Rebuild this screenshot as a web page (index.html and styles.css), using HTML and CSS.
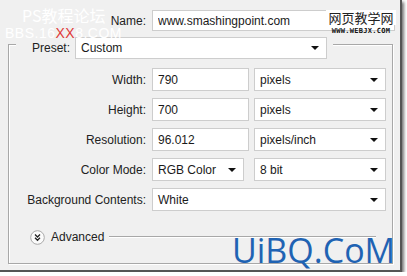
FILE: index.html
```html
<!DOCTYPE html>
<html lang="en">
  <head>
    <meta charset="UTF-8" />
    <meta name="viewport" content="width=device-width, initial-scale=1.0" />
    <title>New Document</title>
    <link rel="stylesheet" href="styles.css">
  </head>
  <body>
    <div class="dialog">
      <div class="row name-row">
        <label class="label name-label" for="name-input">Name:</label>
        <input class="field name-field" type="text" id="name-input" value="www.smashingpoint.com" />
      </div>

      <div class="group">
        <div class="preset">
          <span class="label">Preset:</span>
          <div class="select preset-select"><span>Custom</span><i class="caret"></i></div>
        </div>

        <div class="fields">
          <div class="row">
            <span class="label">Width:</span>
            <input class="field num" type="text" value="790" />
            <div class="select unit"><span>pixels</span><i class="caret"></i></div>
          </div>
          <div class="row">
            <span class="label">Height:</span>
            <input class="field num" type="text" value="700" />
            <div class="select unit"><span>pixels</span><i class="caret"></i></div>
          </div>
          <div class="row">
            <span class="label">Resolution:</span>
            <input class="field num" type="text" value="96.012" />
            <div class="select unit"><span>pixels/inch</span><i class="caret"></i></div>
          </div>
          <div class="row">
            <span class="label">Color Mode:</span>
            <div class="select mode"><span>RGB Color</span><i class="caret"></i></div>
            <div class="select unit"><span>8 bit</span><i class="caret"></i></div>
          </div>
          <div class="row">
            <span class="label">Background Contents:</span>
            <div class="select wide"><span>White</span><i class="caret"></i></div>
          </div>
        </div>

        <div class="advanced">
          <svg class="adv-icon" width="15" height="15" viewBox="0 0 15 15">
            <circle cx="7.5" cy="7.5" r="6.8" fill="#fbfbfb" stroke="#a9a9a9" stroke-width="1" />
            <path d="M5 4.5 L7.5 7 L10 4.5 M5 7.8 L7.5 10.3 L10 7.8" fill="none" stroke="#222" stroke-width="1.3" />
          </svg>
          <span class="adv-text">Advanced</span>
          <span class="adv-line"></span>
        </div>
      </div>

      <!-- watermarks laid over the dialog -->
      <div class="mark-ps">PS教程论坛</div>
      <div class="mark-bbs">BBS.16<span class="red">XX</span>8.COM</div>
      <div class="mark-webjx">
        <div class="webjx-cn">网页教学网</div>
        <div class="webjx-en">WWW.WEBJX.COM</div>
      </div>
      <div class="mark-uibq">UiBQ.CoM</div>
    </div>
  </body>
</html>
```

FILE: styles.css
```css
/* Reset styles */
*,
*::before,
*::after {
  margin: 0;
  padding: 0;
  box-sizing: border-box;
}

body {
  font-family: "Liberation Sans", Arial, sans-serif;
  font-size: 12px;
  color: #222;
  background-color: #fff;
}

.dialog {
  position: relative;
  width: 402px;
  height: 272px;
  padding-top: 10px;
  background-color: #f0f0f0;
  border-right: 2px solid #555;
  border-bottom: 2px solid #555;
  box-shadow: 2px 2px 3px rgba(0, 0, 0, 0.55);
}

.row {
  display: flex;
  align-items: center;
  height: 23px;
}

.label {
  color: #222;
  white-space: nowrap;
}

.fields .label {
  width: 137px;
  margin-right: 6px;
  text-align: right;
}

/* Name row */
.name-row {
  height: 21px;
}

.name-label {
  width: 146px;
  margin-right: 6px;
  text-align: right;
}

.field,
.select {
  height: 100%;
  background-color: #fff;
  border: 1px solid #cdcdcd;
  font-family: inherit;
  font-size: 12px;
  color: #1a1a1a;
}

.field {
  padding: 0 5px;
  outline: none;
}

.name-field {
  width: 243px;
}

.select {
  display: flex;
  align-items: center;
  justify-content: space-between;
  padding: 0 7px 0 5px;
}

.caret {
  width: 0;
  height: 0;
  border-left: 4px solid transparent;
  border-right: 4px solid transparent;
  border-top: 4px solid #111;
}

/* Group box */
.group {
  margin-top: 13px;
  margin-left: 8px;
  width: 385px;
  height: 220px;
  border: 1px solid #a8a8a8;
  box-shadow: inset 1px 1px 0 #fff, 1px 1px 0 #fff;
}

.preset {
  display: inline-flex;
  align-items: center;
  gap: 5px;
  height: 22px;
  margin-top: -8px;
  margin-left: 7px;
  padding: 0 6px 0 16px;
  background-color: #f0f0f0;
  vertical-align: top;
}

.preset-select {
  width: 252px;
}

.fields {
  display: flex;
  flex-direction: column;
  gap: 7px;
  margin-top: 9px;
}

.num {
  width: 97px;
  margin-right: 5px;
}

.unit {
  width: 132px;
}

.mode {
  width: 92px;
  margin-right: 10px;
}

.wide {
  width: 234px;
}

/* Advanced */
.advanced {
  display: flex;
  align-items: center;
  height: 16px;
  margin-top: 18px;
  padding-left: 21px;
  margin-right: 16px;
}

.adv-icon {
  display: block;
  margin-right: 6px;
}

.adv-text {
  margin-right: 5px;
}

.adv-line {
  flex: 1;
  height: 2px;
  border-top: 1px solid #a8a8a8;
  border-bottom: 1px solid #fff;
}

/* Watermarks */
.mark-ps {
  position: absolute;
  left: 22px;
  top: 7px;
  font-family: "Noto Sans CJK SC", sans-serif;
  font-size: 16px;
  line-height: 16px;
  color: #fff;
}

.mark-bbs {
  position: absolute;
  left: 5px;
  top: 26px;
  font-size: 14px;
  line-height: 14px;
  color: #fff;
  letter-spacing: 0.5px;
}

.mark-bbs .red {
  color: #e03a3a;
}

.mark-webjx {
  position: absolute;
  left: 326px;
  top: 10px;
  width: 70px;
  text-align: center;
}

.webjx-cn {
  font-family: "Noto Sans CJK SC", sans-serif;
  font-size: 13px;
  line-height: 15px;
  color: #222;
  background-color: #fff;
}

.webjx-en {
  font-family: "DejaVu Sans Mono", monospace;
  font-size: 7px;
  font-weight: 700;
  line-height: 9px;
  margin-top: 2px;
  color: #111;
  letter-spacing: 0.3px;
}

.mark-uibq {
  position: absolute;
  left: 232px;
  top: 230px;
  font-family: "Open Sans", sans-serif;
  font-size: 34px;
  line-height: 40px;
  color: #1f63b3;
}
```
